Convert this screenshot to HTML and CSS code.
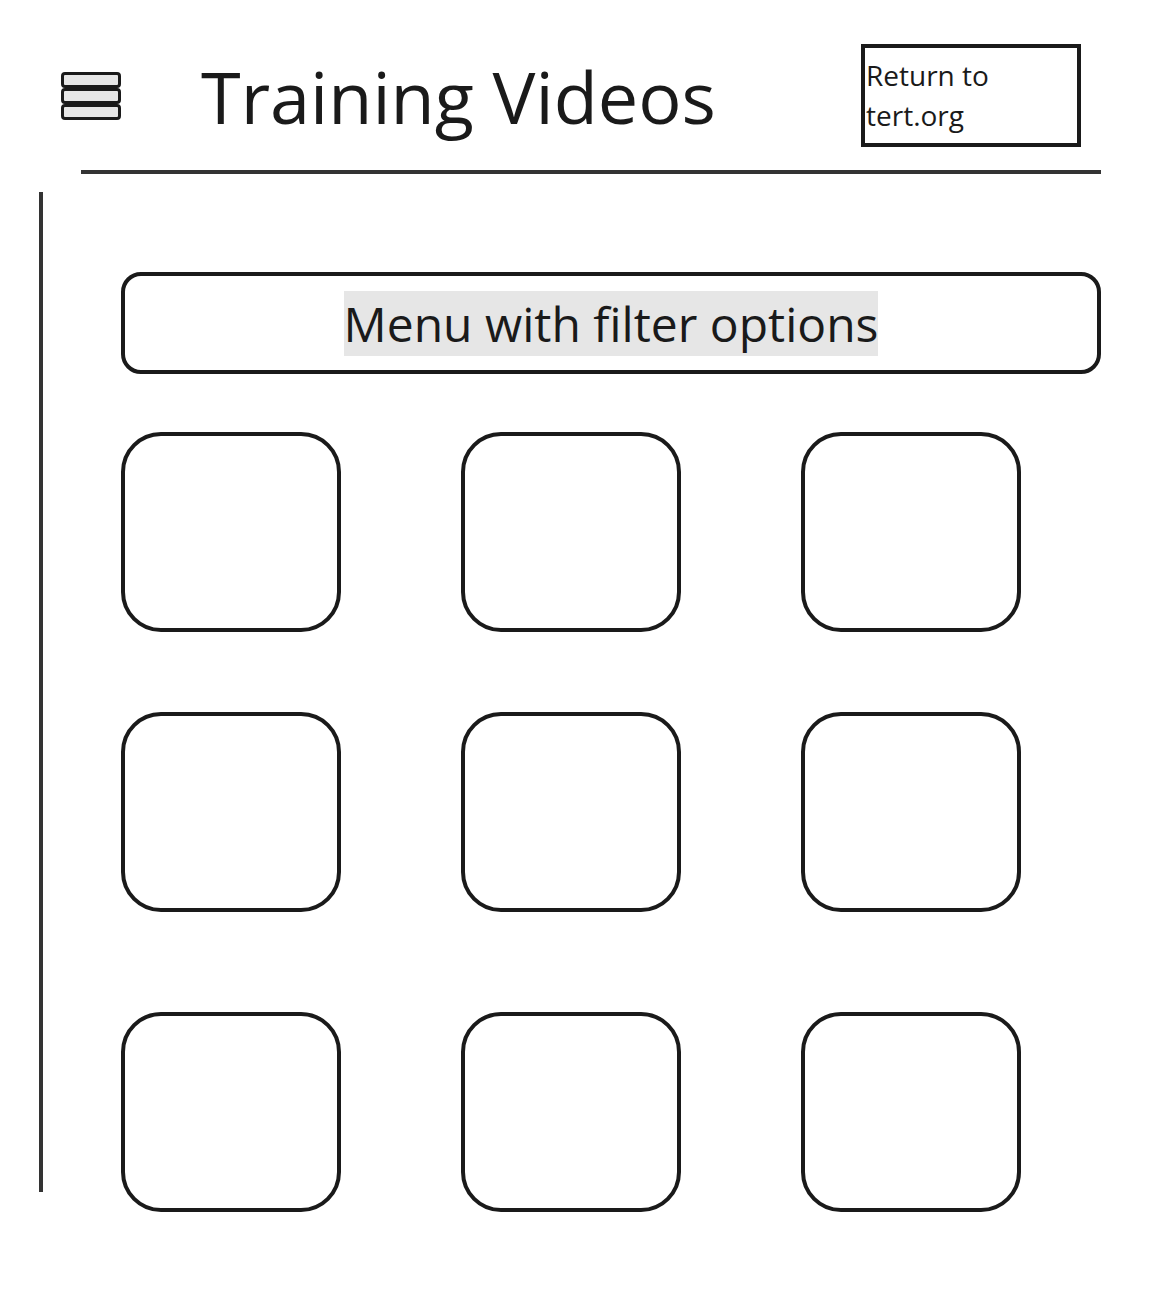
FILE: index.html
```html
<!DOCTYPE html>
<html lang="en">
<head>
<meta charset="utf-8">
<title>Training Videos</title>
<link rel="stylesheet" href="styles.css">
</head>
<body>
  <header class="top">
    <div class="hamburger" aria-label="Menu">
      <span class="bar"></span>
      <span class="bar"></span>
      <span class="bar"></span>
    </div>
    <h1 class="title">Training Videos</h1>
    <a class="return-box" href="#">Return to tert.org</a>
  </header>
  <div class="rule"></div>
  <div class="layout">
    <div class="side-line"></div>
    <main class="content">
      <div class="filter-menu">
        <span class="filter-label">Menu with filter options</span>
      </div>
      <div class="grid">
        <div class="row">
          <div class="card"></div>
          <div class="card"></div>
          <div class="card"></div>
        </div>
        <div class="row row-second">
          <div class="card"></div>
          <div class="card"></div>
          <div class="card"></div>
        </div>
        <div class="row row-third">
          <div class="card"></div>
          <div class="card"></div>
          <div class="card"></div>
        </div>
      </div>
    </main>
  </div>
</body>
</html>
```
FILE: styles.css
```css
* {
  box-sizing: border-box;
}

html, body {
  margin: 0;
  padding: 0;
  background: #ffffff;
}

body {
  font-family: "Open Sans", "Noto Sans", sans-serif;
  color: #1a1a1a;
  width: 1174px;
  min-height: 1290px;
}

.top {
  display: flex;
  align-items: center;
  padding: 44px 93px 0 61px;
  height: 147px;
}

.hamburger {
  display: flex;
  flex-direction: column;
  width: 60px;
  flex: none;
}

.bar {
  display: block;
  height: 16px;
  background: #e6e6e6;
  border: 3px solid #1a1a1a;
  border-radius: 4px;
}

.title {
  margin: 0 0 0 80px;
  font-size: 72px;
  font-weight: 400;
  line-height: 72px;
  color: #1a1a1a;
  white-space: nowrap;
}

.return-box {
  margin-left: auto;
  flex: none;
  width: 220px;
  height: 103px;
  border: 4px solid #1a1a1a;
  padding: 7px 0 0 1px;
  font-size: 28px;
  line-height: 40px;
  color: #1a1a1a;
  text-decoration: none;
}

.rule {
  margin: 23px 0 0 81px;
  width: 1020px;
  height: 4px;
  background: #333333;
}

.layout {
  display: flex;
  margin-top: 18px;
}

.side-line {
  flex: none;
  margin-left: 39px;
  width: 4px;
  height: 1000px;
  background: #333333;
}

.content {
  padding: 80px 0 0 78px;
  width: 1059px;
}

.filter-menu {
  display: flex;
  align-items: center;
  justify-content: center;
  width: 980px;
  height: 102px;
  border: 4px solid #1a1a1a;
  border-radius: 20px;
}

.filter-label {
  background: #e6e6e6;
  font-size: 48px;
  line-height: normal;
  color: #1a1a1a;
}

.grid {
  margin-top: 58px;
}

.row {
  display: flex;
  gap: 120px;
}

.row-second {
  margin-top: 80px;
}

.row-third {
  margin-top: 100px;
}

.card {
  width: 220px;
  height: 200px;
  border: 4px solid #1a1a1a;
  border-radius: 40px;
}
```
